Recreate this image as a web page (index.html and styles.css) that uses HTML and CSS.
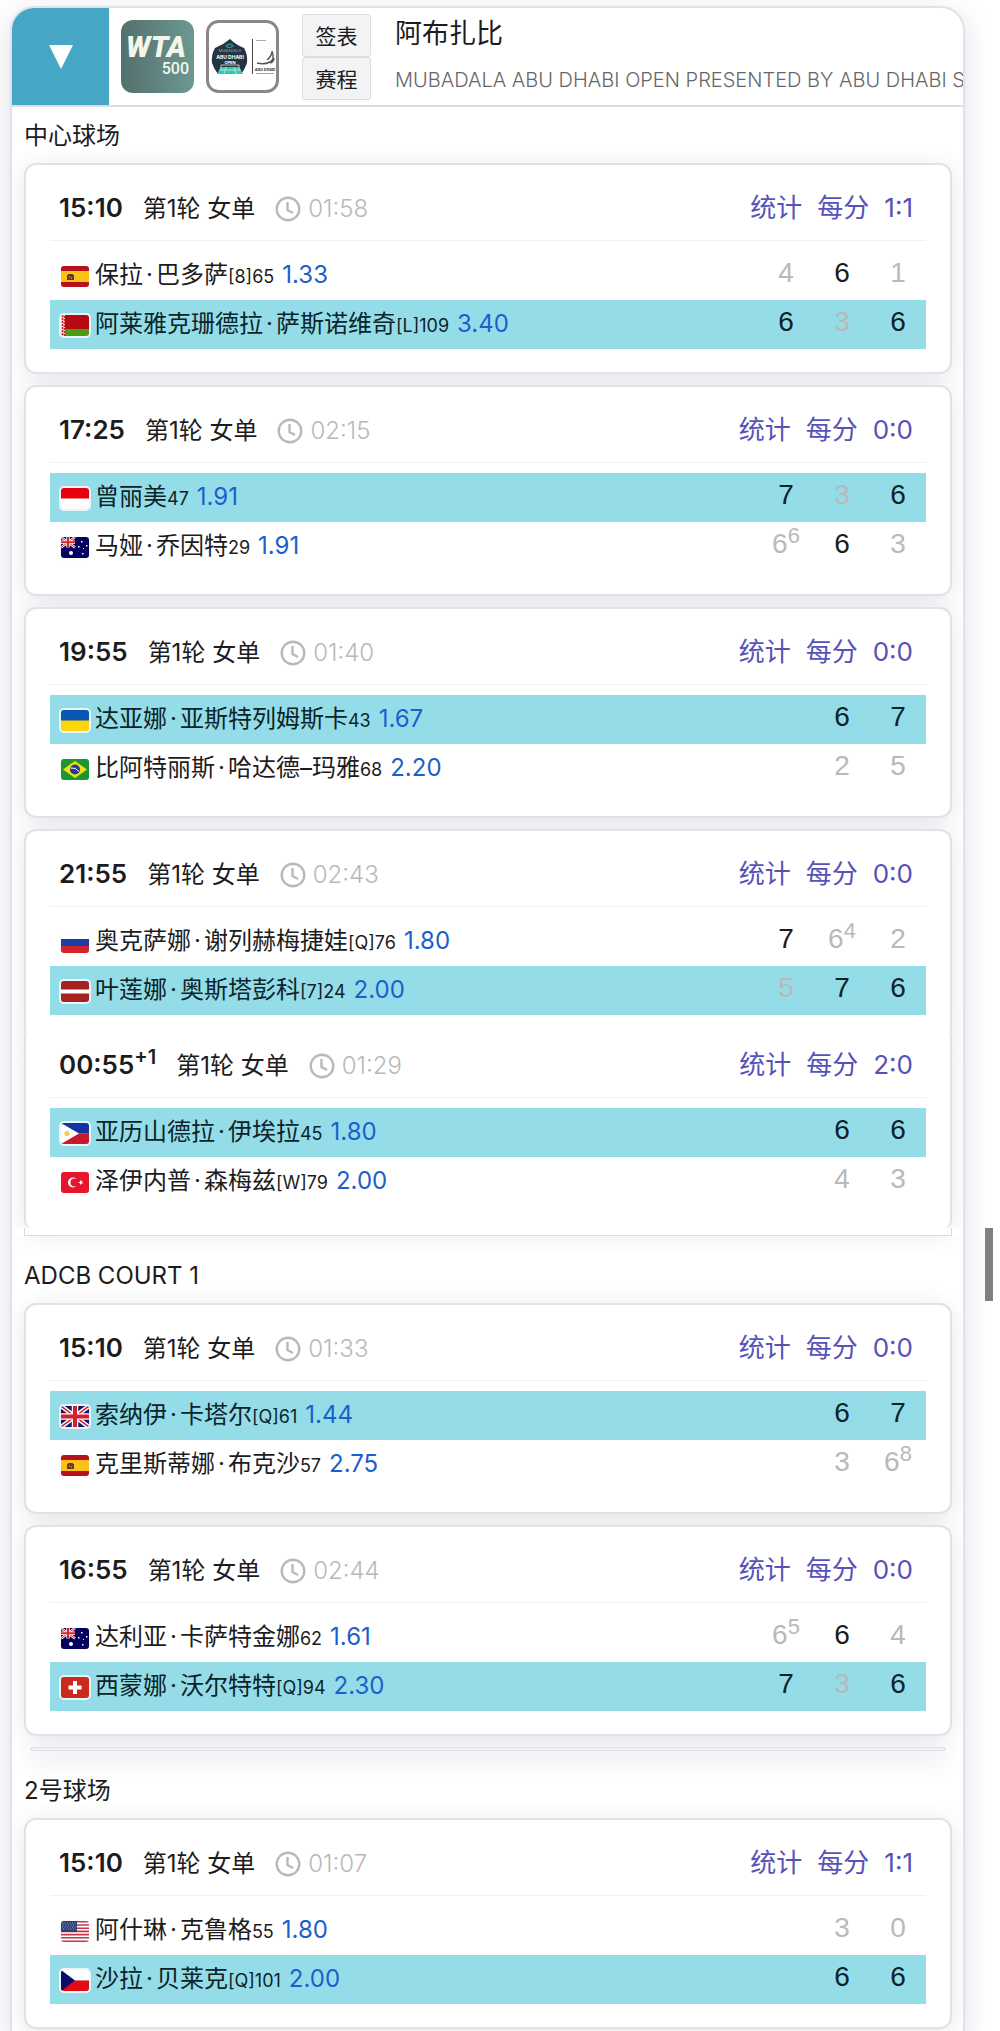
FILE: index.html
```html
<!DOCTYPE html>
<html lang="zh-CN">

<head>
    <meta charset="UTF-8">
    <meta name="viewport" content="width=device-width, initial-scale=1.0">
    <title>阿布扎比 - 赛程</title>
    <link rel="stylesheet" href="styles.css">
</head>

<body>
    <!-- Flags and icons -->
    <svg class="sprite" aria-hidden="true">
        <symbol id="clock" viewBox="0 0 26 26">
            <circle cx="13" cy="13" r="11.3" fill="none" stroke="#b9b9b9" stroke-width="2.4" />
            <path d="M12.5 6v8l5.500 3" fill="none" stroke="#b9b9b9" stroke-width="2.400" />
        </symbol>
        <symbol id="es" viewBox="0 0 28 21">
            <path fill="#b5121b" d="M0 0h28v21H0z" />
            <path fill="#fcc21a" d="M0 5h28v11H0z" />
            <path fill="#6b3a1c" d="M6 9h1v5H6zM12 9h1v5h-1zM7 8h5v6H7z" />
            <path fill="#c9762b" d="M8 10h1v2H8zM10 11h1v2h-1z" />
        </symbol>
        <symbol id="by" viewBox="0 0 28 21">
            <path fill="#b50a0f" d="M0 0h28v14H0z" />
            <path fill="#4a9a14" d="M0 14h28v7H0z" />
            <path fill="#f3dcdc" d="M0 0h4v21H0z" />
            <path stroke="#c22" stroke-width="1.500" stroke-dasharray="2 1" d="M1.500 0v21M3.500 1v20" />
        </symbol>
        <symbol id="id" viewBox="0 0 28 21">
            <path fill="#fff" d="M0 0h28v21H0z" />
            <path fill="#e6000f" d="M0 0h28v10.500H0z" />
        </symbol>
        <symbol id="au" viewBox="0 0 28 21">
            <path fill="#02025e" d="M0 0h28v21H0z" />
            <path stroke="#fff" stroke-width="2.400" d="M0 0l14 10.500M14 0L0 10.500" />
            <path stroke="#d22" stroke-width="1" d="M0 0l14 10.500M14 0L0 10.500" />
            <path stroke="#fff" stroke-width="3.400" d="M7 0v10.500M0 5.200h14" />
            <path stroke="#d22" stroke-width="2" d="M7 0v10.500M0 5.200h14" />
            <circle cx="10" cy="16" r="2" fill="#fff" />
            <path fill="#fff" d="M20 4h1.500v1.500H20zM17 9h1.500v1.500H17zM25 8h1.500v1.500H25zM22 11h1v1h-1zM21 16h1.500v1.500H21z" />
        </symbol>
        <symbol id="ua" viewBox="0 0 28 21">
            <path fill="#fdd50a" d="M0 0h28v21H0z" />
            <path fill="#0a56b4" d="M0 0h28v10.500H0z" />
        </symbol>
        <symbol id="br" viewBox="0 0 28 21">
            <path fill="#1a9632" d="M0 0h28v21H0z" />
            <path fill="#f7dc1b" d="M14 2l12 8.500L14 19 2 10.500z" />
            <circle cx="14" cy="10.500" r="5" fill="#233f86" />
            <path d="M9.500 9q5-1 8.500 3.500" fill="none" stroke="#fff" stroke-width="1" />
        </symbol>
        <symbol id="ru" viewBox="0 0 28 21">
            <path fill="#fff" d="M0 0h28v7H0z" />
            <path fill="#1a3ea6" d="M0 7h28v7H0z" />
            <path fill="#d3232b" d="M0 14h28v7H0z" />
        </symbol>
        <symbol id="lv" viewBox="0 0 28 21">
            <path fill="#a5231f" d="M0 0h28v21H0z" />
            <path fill="#fff" d="M0 8.500h28v4H0z" />
        </symbol>
        <symbol id="ph" viewBox="0 0 28 21">
            <path fill="#1234a0" d="M0 0h28v10.500H0z" />
            <path fill="#c8182c" d="M0 10.500h28V21H0z" />
            <path fill="#fff" d="M0 0l18 10.500L0 21z" />
            <circle cx="6" cy="10.500" r="2.600" fill="#f3cf5a" />
        </symbol>
        <symbol id="tr" viewBox="0 0 28 21">
            <path fill="#e6142d" d="M0 0h28v21H0z" />
            <circle cx="12" cy="10.500" r="5" fill="#fff" />
            <circle cx="13.500" cy="10.500" r="4" fill="#e6142d" />
            <path fill="#fff" d="M17 10.500l2-.7V7.800l1.200 1.600 2-.6-1.200 1.700 1.200 1.700-2-.6-1.200 1.600v-2z" />
        </symbol>
        <symbol id="gb" viewBox="0 0 28 21">
            <path fill="#14146e" d="M0 0h28v21H0z" />
            <path stroke="#fff" stroke-width="4.500" d="M0 0l28 21M28 0L0 21" />
            <path stroke="#d3202c" stroke-width="1.500" d="M0 0l28 21M28 0L0 21" />
            <path stroke="#fff" stroke-width="6.500" d="M14 0v21M0 10.500h28" />
            <path stroke="#d3202c" stroke-width="4" d="M14 0v21M0 10.500h28" />
        </symbol>
        <symbol id="ch" viewBox="0 0 28 21">
            <path fill="#cb2a1f" d="M0 0h28v21H0z" />
            <path stroke="#fff" stroke-width="4" d="M14 4v13M7.500 10.500h13" />
        </symbol>
        <symbol id="us" viewBox="0 0 28 21">
            <path fill="#fff" d="M0 0h28v21H0z" />
            <path stroke="#c4394a" stroke-width="1.600" d="M0 .8h28M0 4h28M0 7.200h28M0 10.400h28M0 13.600h28M0 16.800h28M0 20.200h28" />
            <path fill="#2b3f77" d="M0 0h16v11H0z" />
            <path stroke="#9aa6c8" stroke-width="1" stroke-dasharray="1 1.500" d="M1 2h14M2 4h13M1 6h14M2 8h13" />
        </symbol>
        <symbol id="cz" viewBox="0 0 28 21">
            <path fill="#fff" d="M0 0h28v10.500H0z" />
            <path fill="#e30b13" d="M0 10.500h28V21H0z" />
            <path fill="#0b0b6b" d="M0 0l14 10.500L0 21z" />
        </symbol>
    </svg>

    <main class="panel">
        <header class="event">
            <button type="button" class="toggle" aria-label="收起">
                <svg width="24" height="24" viewBox="0 0 24 24"><path fill="#fff" d="M0 0h24L12 24z" /></svg>
            </button>
            <div class="logos">
                <svg class="logo" viewBox="0 0 73 73">
                    <defs>
                        <linearGradient id="wta" x1="0" y1="0" x2="1" y2="0">
                            <stop offset="0" stop-color="#54706d" />
                            <stop offset="1" stop-color="#6c9892" />
                        </linearGradient>
                    </defs>
                    <rect width="73" height="73" rx="12" fill="url(#wta)" />
                    <text class="wta" x="5" y="37">WTA</text>
                    <text class="wta-level" x="68" y="54">500</text>
                </svg>
                <svg class="logo" viewBox="0 0 73 73">
                    <rect x="1.500" y="1.500" width="70" height="70" rx="11" fill="#fff" stroke="#888" stroke-width="3" />
                    <path fill="#243440" d="M24 19q6 6 14 9 4 7 3 15-2 6-6 11H12q-4-5-6-11-1-8 3-15 8-3 15-9z" />
                    <path fill="none" stroke="#2f8f8d" stroke-width="1.500" d="M20 26q4-4 7 0-4 3-7 0z" />
                    <path fill="#2fc8bc" d="M15 47h18l4 7H11z" />
                    <path fill="none" stroke="#e8e2c0" stroke-width=".8" d="M15 50v-5h18v5M13 50h22M20 47l-2 7M28 47l2 7" />
                    <text class="tiny" x="24" y="32">MUBADALA</text>
                    <text class="tiny tiny-bold" x="24" y="39">ABU DHABI</text>
                    <text class="tiny tiny-open" x="24" y="44">OPEN</text>
                    <path stroke="#444" stroke-width="1" d="M46.500 19v35" />
                    <path stroke="#999" stroke-width=".8" d="M50 20.500h10" />
                    <path fill="none" stroke="#555" stroke-width="1.400" d="M51 43q7 2 13-1 5-3 2-11M66 32q-1 5-5 8M68 38q0 4-4 5" />
                    <text class="tiny tiny-dark" x="59" y="51">Abu Dhabi</text>
                    <path stroke="#888" stroke-width=".8" d="M50 53.500h18" />
                </svg>
            </div>
            <div class="event-links">
                <button type="button">签表</button>
                <button type="button">赛程</button>
            </div>
            <div class="event-name">
                <h1>阿布扎比</h1>
                <p>MUBADALA ABU DHABI OPEN PRESENTED BY ABU DHABI SPORTS COUNCIL</p>
            </div>
        </header>

        <section class="court">
            <h2>中心球场</h2>

            <article class="match">
                <div class="match-head">
                    <b class="time">15:10</b>
                    <span>第1轮 女单</span>
                    <span class="duration"><svg><use href="#clock" /></svg>01:58</span>
                    <nav><a href="#">统计</a><a href="#">每分</a><a href="#">1:1</a></nav>
                </div>
                <table>
                    <tr>
                        <td class="player"><svg class="flag"><use href="#es" /></svg>保拉<i>·</i>巴多萨<small>[8]65</small><a href="#">1.33</a></td>
                        <td>4</td>
                        <td class="won">6</td>
                        <td>1</td>
                    </tr>
                    <tr class="winner">
                        <td class="player"><svg class="flag"><use href="#by" /></svg>阿莱雅克珊德拉<i>·</i>萨斯诺维奇<small>[L]109</small><a href="#">3.40</a></td>
                        <td class="won">6</td>
                        <td>3</td>
                        <td class="won">6</td>
                    </tr>
                </table>
            </article>

            <article class="match">
                <div class="match-head">
                    <b class="time">17:25</b>
                    <span>第1轮 女单</span>
                    <span class="duration"><svg><use href="#clock" /></svg>02:15</span>
                    <nav><a href="#">统计</a><a href="#">每分</a><a href="#">0:0</a></nav>
                </div>
                <table>
                    <tr class="winner">
                        <td class="player"><svg class="flag"><use href="#id" /></svg>曾丽美<small>47</small><a href="#">1.91</a></td>
                        <td class="won">7</td>
                        <td>3</td>
                        <td class="won">6</td>
                    </tr>
                    <tr>
                        <td class="player"><svg class="flag"><use href="#au" /></svg>马娅<i>·</i>乔因特<small>29</small><a href="#">1.91</a></td>
                        <td>6<sup>6</sup></td>
                        <td class="won">6</td>
                        <td>3</td>
                    </tr>
                </table>
            </article>

            <article class="match">
                <div class="match-head">
                    <b class="time">19:55</b>
                    <span>第1轮 女单</span>
                    <span class="duration"><svg><use href="#clock" /></svg>01:40</span>
                    <nav><a href="#">统计</a><a href="#">每分</a><a href="#">0:0</a></nav>
                </div>
                <table>
                    <tr class="winner">
                        <td class="player"><svg class="flag"><use href="#ua" /></svg>达亚娜<i>·</i>亚斯特列姆斯卡<small>43</small><a href="#">1.67</a></td>
                        <td></td>
                        <td class="won">6</td>
                        <td class="won">7</td>
                    </tr>
                    <tr>
                        <td class="player"><svg class="flag"><use href="#br" /></svg>比阿特丽斯<i>·</i>哈达德–玛雅<small>68</small><a href="#">2.20</a></td>
                        <td></td>
                        <td>2</td>
                        <td>5</td>
                    </tr>
                </table>
            </article>

            <article class="match match-joined">
                <div class="match-head">
                    <b class="time">21:55</b>
                    <span>第1轮 女单</span>
                    <span class="duration"><svg><use href="#clock" /></svg>02:43</span>
                    <nav><a href="#">统计</a><a href="#">每分</a><a href="#">0:0</a></nav>
                </div>
                <table>
                    <tr>
                        <td class="player"><svg class="flag"><use href="#ru" /></svg>奥克萨娜<i>·</i>谢列赫梅捷娃<small>[Q]76</small><a href="#">1.80</a></td>
                        <td class="won">7</td>
                        <td>6<sup>4</sup></td>
                        <td>2</td>
                    </tr>
                    <tr class="winner">
                        <td class="player"><svg class="flag"><use href="#lv" /></svg>叶莲娜<i>·</i>奥斯塔彭科<small>[7]24</small><a href="#">2.00</a></td>
                        <td>5</td>
                        <td class="won">7</td>
                        <td class="won">6</td>
                    </tr>
                </table>
            </article>

            <article class="match match-next-day">
                <div class="match-head">
                    <b class="time">00:55<sup>+1</sup></b>
                    <span>第1轮 女单</span>
                    <span class="duration"><svg><use href="#clock" /></svg>01:29</span>
                    <nav><a href="#">统计</a><a href="#">每分</a><a href="#">2:0</a></nav>
                </div>
                <table>
                    <tr class="winner">
                        <td class="player"><svg class="flag"><use href="#ph" /></svg>亚历山德拉<i>·</i>伊埃拉<small>45</small><a href="#">1.80</a></td>
                        <td></td>
                        <td class="won">6</td>
                        <td class="won">6</td>
                    </tr>
                    <tr>
                        <td class="player"><svg class="flag"><use href="#tr" /></svg>泽伊内普<i>·</i>森梅兹<small>[W]79</small><a href="#">2.00</a></td>
                        <td></td>
                        <td>4</td>
                        <td>3</td>
                    </tr>
                </table>
            </article>
            <div class="court-end"><div></div></div>
        </section>

        <section class="court">
            <h2>ADCB COURT 1</h2>

            <article class="match">
                <div class="match-head">
                    <b class="time">15:10</b>
                    <span>第1轮 女单</span>
                    <span class="duration"><svg><use href="#clock" /></svg>01:33</span>
                    <nav><a href="#">统计</a><a href="#">每分</a><a href="#">0:0</a></nav>
                </div>
                <table>
                    <tr class="winner">
                        <td class="player"><svg class="flag"><use href="#gb" /></svg>索纳伊<i>·</i>卡塔尔<small>[Q]61</small><a href="#">1.44</a></td>
                        <td></td>
                        <td class="won">6</td>
                        <td class="won">7</td>
                    </tr>
                    <tr>
                        <td class="player"><svg class="flag"><use href="#es" /></svg>克里斯蒂娜<i>·</i>布克沙<small>57</small><a href="#">2.75</a></td>
                        <td></td>
                        <td>3</td>
                        <td>6<sup>8</sup></td>
                    </tr>
                </table>
            </article>

            <article class="match">
                <div class="match-head">
                    <b class="time">16:55</b>
                    <span>第1轮 女单</span>
                    <span class="duration"><svg><use href="#clock" /></svg>02:44</span>
                    <nav><a href="#">统计</a><a href="#">每分</a><a href="#">0:0</a></nav>
                </div>
                <table>
                    <tr>
                        <td class="player"><svg class="flag"><use href="#au" /></svg>达利亚<i>·</i>卡萨特金娜<small>62</small><a href="#">1.61</a></td>
                        <td>6<sup>5</sup></td>
                        <td class="won">6</td>
                        <td>4</td>
                    </tr>
                    <tr class="winner">
                        <td class="player"><svg class="flag"><use href="#ch" /></svg>西蒙娜<i>·</i>沃尔特特<small>[Q]94</small><a href="#">2.30</a></td>
                        <td class="won">7</td>
                        <td>3</td>
                        <td class="won">6</td>
                    </tr>
                </table>
            </article>
            <div class="court-strip"></div>
        </section>

        <section class="court">
            <h2>2号球场</h2>

            <article class="match">
                <div class="match-head">
                    <b class="time">15:10</b>
                    <span>第1轮 女单</span>
                    <span class="duration"><svg><use href="#clock" /></svg>01:07</span>
                    <nav><a href="#">统计</a><a href="#">每分</a><a href="#">1:1</a></nav>
                </div>
                <table>
                    <tr>
                        <td class="player"><svg class="flag"><use href="#us" /></svg>阿什琳<i>·</i>克鲁格<small>55</small><a href="#">1.80</a></td>
                        <td></td>
                        <td>3</td>
                        <td>0</td>
                    </tr>
                    <tr class="winner">
                        <td class="player"><svg class="flag"><use href="#cz" /></svg>沙拉<i>·</i>贝莱克<small>[Q]101</small><a href="#">2.00</a></td>
                        <td></td>
                        <td class="won">6</td>
                        <td class="won">6</td>
                    </tr>
                </table>
            </article>
        </section>
    </main>

    <div class="scroll-thumb"></div>
</body>

</html>
```
FILE: styles.css
```css
* {
    box-sizing: border-box;
}

body {
    margin: 0;
    padding: 6px 35px 0 10px;
    background: #fff;
    color: #1c1c1e;
    font-family: Inter, "Noto Sans CJK SC", sans-serif;
    font-size: 24px;
    font-weight: 400;
}

a {
    text-decoration: none;
}

h1,
h2,
p {
    margin: 0;
    font-weight: 400;
}

.sprite {
    position: absolute;
    width: 0;
    height: 0;
}

.panel {
    border: 2px solid #e0e1ea;
    border-bottom: none;
    border-radius: 24px 24px 0 0;
    background: #fff;
    box-shadow: 0 8px 28px rgba(80, 80, 120, 0.18);
    overflow: hidden;
    padding-bottom: 3px;
}

/* Tournament header */
.event {
    display: flex;
    align-items: center;
    height: 99px;
    border-bottom: 2px solid #dddde0;
}

.toggle {
    flex: none;
    display: flex;
    align-items: center;
    justify-content: center;
    width: 97px;
    height: 97px;
    padding: 0;
    border: none;
    background: #46a6c6;
    cursor: pointer;
}

.logos {
    flex: none;
    display: flex;
    gap: 12px;
    margin: 0 23px 0 12px;
}

.logo {
    width: 73px;
    height: 73px;
}

.wta {
    font-family: Roboto, sans-serif;
    font-size: 29px;
    font-weight: 900;
    font-style: italic;
    fill: #f4f6ea;
}

.wta-level {
    font-family: Roboto, sans-serif;
    font-size: 16px;
    font-weight: 500;
    text-anchor: end;
    fill: #f4f6ea;
}

.tiny {
    font-size: 4px;
    text-anchor: middle;
    fill: #9fb3b5;
}

.tiny-bold {
    font-size: 5px;
    font-weight: 700;
    fill: #fff;
}

.tiny-open {
    font-weight: 700;
    fill: #fff;
}

.tiny-dark {
    font-weight: 700;
    fill: #333;
}

.event-links {
    flex: none;
    display: flex;
    flex-direction: column;
    width: 69px;
}

.event-links button {
    height: 43px;
    padding: 0;
    border: 1px solid #dcdcdc;
    border-radius: 3px;
    background: #f3f3f3;
    color: #1c1c1e;
    font-family: inherit;
    font-size: 21px;
    cursor: pointer;
}

.event-name {
    flex: 1;
    min-width: 0;
    margin-left: 24px;
    line-height: 46px;
    white-space: nowrap;
    overflow: hidden;
}

.event-name h1 {
    font-size: 27px;
}

.event-name p {
    font-size: 20px;
    font-weight: 300;
    color: #666;
}

/* Courts */
.court {
    padding: 0 11px 0 12px;
    isolation: isolate;
}

.court + .court {
    margin-top: 11px;
}

.court h2 {
    padding-top: 2px;
    font-size: 24px;
    line-height: 54px;
}

/* Matches */
.match {
    position: relative;
    padding: 13px 24px 23px;
    border: 2px solid #e0e1ea;
    border-radius: 12px;
    background: #fff;
}

.match + .match {
    margin-top: 11px;
}

/* keeps the shadow under the neighbouring cards */
.match::before {
    content: "";
    position: absolute;
    inset: 0;
    z-index: -1;
    border-radius: 12px;
    box-shadow: 0 4px 24px rgba(70, 70, 100, 0.16);
}

.match-joined {
    padding-bottom: 18px;
    border-bottom: none;
    border-radius: 12px 12px 4px 4px;
}

.match-joined + .match-next-day {
    margin-top: 0;
    padding-top: 2px;
    padding-bottom: 22px;
    border-top: none;
    border-bottom: none;
    border-radius: 0 0 8px 8px;
}

.match-head {
    display: flex;
    align-items: baseline;
    gap: 20px;
    height: 63px;
    margin-bottom: 10px;
    padding: 0 13px 0 9px;
    border-bottom: 1px solid #f0f0f3;
    line-height: 60px;
    white-space: nowrap;
}

.time {
    font-size: 26px;
    font-weight: 600;
}

.time sup {
    font-size: 20px;
    line-height: 0;
}

.duration {
    color: #b9b9b9;
    font-weight: 300;
}

.duration svg {
    width: 26px;
    height: 26px;
    margin-right: 7px;
    vertical-align: -5px;
}

.match-head nav {
    display: flex;
    align-items: baseline;
    gap: 15px;
    margin-left: auto;
    font-size: 26px;
}

.match-head nav a {
    color: #5652b8;
}

.match table {
    width: 100%;
    border-collapse: collapse;
    table-layout: fixed;
}

.match td {
    width: 56px;
    height: 49px;
    padding: 0;
    color: #b9b9b9;
    font-family: "Liberation Sans", Arial, sans-serif;
    font-size: 28px;
    font-weight: 400;
    line-height: 44px;
    text-align: center;
    vertical-align: top;
}

.match td sup {
    font-size: 22px;
    line-height: 0;
}

.match td.won {
    color: #1c1c1e;
}

.match td.player {
    width: auto;
    padding-left: 11px;
    color: #1c1c1e;
    font-family: inherit;
    font-size: 24px;
    line-height: 40px;
    text-align: left;
    vertical-align: middle;
    white-space: nowrap;
}

.match .winner {
    background: #94dde8;
}

.match .winner .won,
.match .winner .player {
    color: #0c2328;
}

.flag {
    width: 28px;
    height: 21px;
    margin-right: 6px;
    border-radius: 3px;
    box-shadow: 0 0 0 2px rgba(255, 255, 255, 0.8), 0 0 3px rgba(0, 0, 0, 0.2);
    vertical-align: -4px;
}

.player i {
    margin: 0 3px;
    font-style: normal;
}

.player small {
    font-size: 18px;
}

.player a {
    margin-left: 8px;
    color: #1a60cc;
}

.court-end {
    margin: 0 -11px 0 -12px;
    padding: 0 11px 0 12px;
    background: #fff;
}

.court-end div {
    height: 8px;
    border: 1px solid #dcdcdf;
    border-top: none;
}

.court-strip {
    height: 4px;
    margin: 11px 6px 0;
    border: 1px solid #dfe1ea;
    border-radius: 12px;
    background: #edf1f9;
    box-shadow: 0 8px 22px rgba(70, 70, 100, 0.3);
}

.scroll-thumb {
    position: absolute;
    top: 1228px;
    right: 7px;
    width: 8px;
    height: 73px;
    background: #808080;
}
```
